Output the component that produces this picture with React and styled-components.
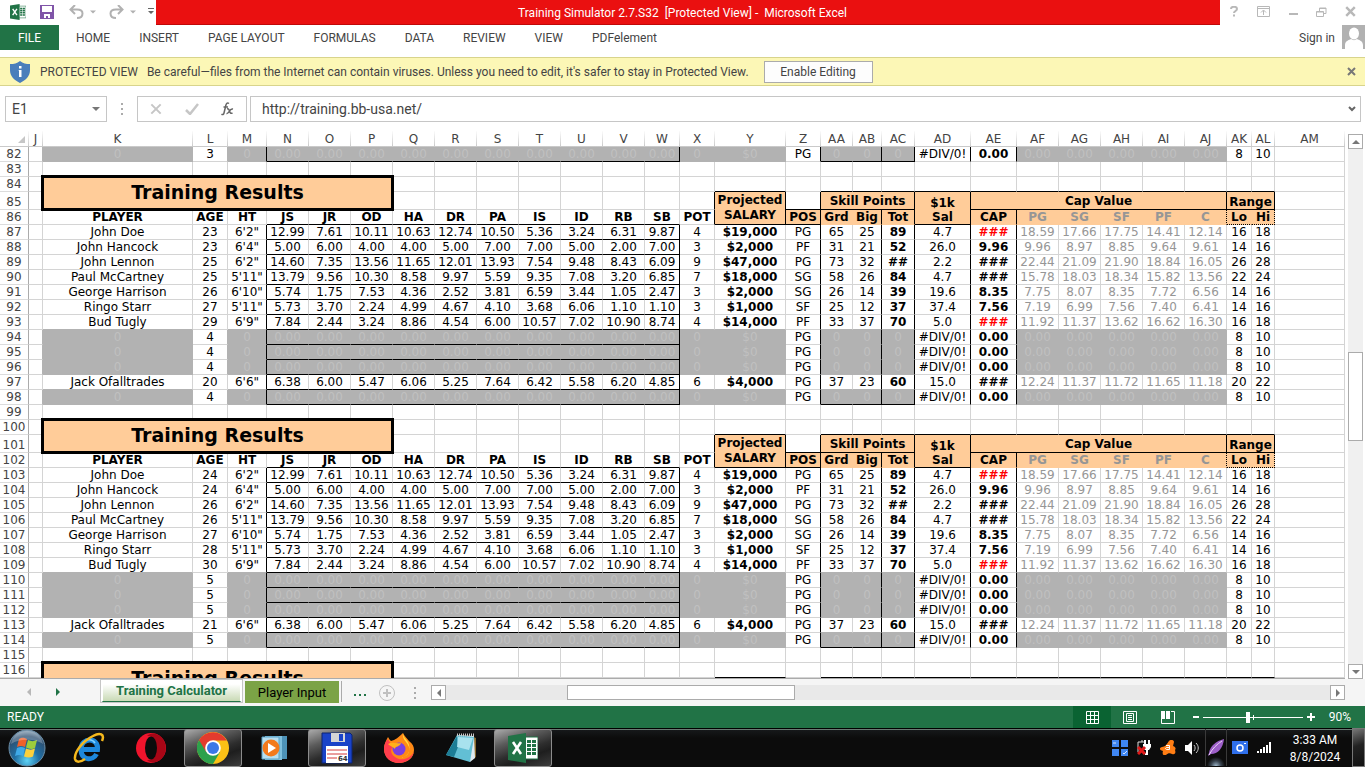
import React from 'react';
import styled, { createGlobalStyle, css } from 'styled-components';

const GlobalStyle = createGlobalStyle`
  * {
    box-sizing: border-box;
  }
  body {
    margin: 0;
    background: #fff;
    color: #444;
    font-family: Roboto, "Open Sans", sans-serif;
    font-size: 12px;
  }
  button, input {
    font: inherit;
    color: inherit;
    margin: 0;
    padding: 0;
    border: 0;
    border-radius: 0;
    background: none;
  }
  svg {
    display: block;
    flex: none;
  }
`;

const BLACK = '#000';
const LINE = '#d4d4d4';
const GREY = '#b2b2b2';
const PEACH = '#ffcc99';

/* ---------- window ---------- */

const Window = styled.div`
  display: flex;
  flex-direction: column;
  height: 100vh;
  overflow: hidden;
`;

const TitleBar = styled.header`
  display: flex;
  flex: none;
  height: 25px;
`;

const QuickAccess = styled.div`
  display: flex;
  align-items: center;
  width: 156px;
  padding: 0 3px 2px 10px;
`;

const QuickButton = styled.button`
  display: flex;
  align-items: center;
  gap: 6px;
  margin-right: ${props => props.$gap || 0}px;
`;

const Title = styled.div`
  flex: 1;
  padding-right: 11px;
  background: #ea1010;
  border-bottom: 1px solid #c00808;
  color: #fff;
  text-align: center;
  line-height: 26px;
  white-space: pre;
`;

const WindowButtons = styled.div`
  display: flex;
  align-items: center;
  justify-content: space-between;
  width: 145px;
  padding: 0 9px 2px 10px;
`;

const Ribbon = styled.nav`
  display: flex;
  flex: none;
  height: 32px;
  line-height: 26px;
`;

const FileTab = styled.button`
  width: 59px;
  height: 25px;
  background: #217346;
  color: #fff;
`;

const Tabs = styled.div`
  display: flex;
  flex: 1;
  gap: 29px;
  padding-left: 17px;
`;

const Tab = styled.button`
  height: 26px;
  white-space: nowrap;
`;

const SignIn = styled.button`
  display: flex;
  gap: 7px;
  height: 24px;
`;

const ProtectedBar = styled.div`
  display: flex;
  flex: none;
  align-items: center;
  height: 29px;
  padding: 0 9px 0 10px;
  background: #fcf7b6;
  border-top: 1px solid #d8d48c;
  border-bottom: 1px solid #d8d48c;
  white-space: nowrap;
`;

const ProtectedLabel = styled.span`
  margin: 0 9px 0 10px;
`;

const EnableButton = styled.button`
  width: 109px;
  height: 22px;
  margin: 0 auto 0 15px;
  background: #fdfdfd;
  border: 1px solid #ababab;
`;

const FormulaRow = styled.div`
  display: flex;
  flex: none;
  align-items: center;
  height: 45px;
  padding: 0 4px 0 5px;
`;

const Box = styled.div`
  display: flex;
  align-items: center;
  height: 26px;
  border: 1px solid #c6c6c6;
  flex: ${props => (props.$width ? 'none' : 1)};
  width: ${props => (props.$width ? `${props.$width}px` : 'auto')};
  padding: ${props => props.$pad || '0 6px'};
  justify-content: space-between;
`;

const BoxInput = styled.input`
  flex: 1;
  min-width: 0;
  height: 24px;
  outline: 0;
  font-size: 14px;
`;

const Dots = styled.span`
  display: flex;
  flex-direction: column;
  gap: 3px;
  margin: ${props => props.$margin};

  i {
    width: 2px;
    height: 2px;
    background: #ababab;
  }
`;

/* ---------- sheet ---------- */

const SheetArea = styled.main`
  display: flex;
  flex: 1;
  min-height: 0;
`;

const SheetView = styled.div`
  flex: 1;
  min-width: 0;
  overflow: hidden;
  border-bottom: 1px solid #ababab;
`;

const Sheet = styled.table`
  width: 100%;
  table-layout: fixed;
  border-collapse: separate;
  border-spacing: 0;
  font-family: "DejaVu Sans", Verdana, sans-serif;
  font-size: 12px;
  line-height: 14px;
  color: #000;
`;

const Row = styled.tr`
  height: ${props => props.$height || 15}px;
`;

const cellBase = css`
  padding: 0;
  overflow: hidden;
  text-align: center;
  white-space: nowrap;
`;

const ColHead = styled.th`
  ${cellBase}
  vertical-align: bottom;
  color: #444;
  font-weight: normal;
  border-bottom: 1px solid #ababab;
  border-right: 1px solid;
  border-image: linear-gradient(#fff, #c8c8c8) 1;
  border-bottom-color: #ababab;
`;

const RowHead = styled.th`
  ${cellBase}
  vertical-align: bottom;
  color: #444;
  font-weight: normal;
  border-bottom: 1px solid #dcdcdc;
  border-right: 1px solid #ababab;
`;

const Cell = styled.td`
  ${cellBase}
  background: ${props => props.$fill || '#fff'};
  color: ${props => props.$color || BLACK};
  font-weight: ${props => (props.$bold ? 'bold' : 'normal')};
  line-height: ${props => props.$leading || 14}px;
  vertical-align: ${props => (props.$low ? 'bottom' : 'middle')};
  border-right: 1px ${props => (props.$dotRight ? 'dotted' : 'solid')} ${props => props.$right || LINE};
  border-bottom: 1px ${props => (props.$dotBottom ? 'dotted' : 'solid')} ${props => props.$bottom || LINE};
`;

const TitleCell = styled.td`
  position: relative;
  padding: 0 0 3px;
  background: ${PEACH};
  border-right: 1px solid ${BLACK};
  border-bottom: 1px solid ${BLACK};
  font-size: 19px;
  font-weight: bold;
  line-height: 24px;
  text-align: center;

  /* thick frame runs over the neighbouring grid lines */
  &::after {
    content: "";
    position: absolute;
    inset: -2px;
    border: 3px solid ${BLACK};
  }
`;

const VScroll = styled.div`
  display: flex;
  flex-direction: column;
  width: 20px;
  padding: 3px 2px 0 3px;
  background: #fff;
`;

const VTrack = styled.div`
  flex: 1;
  background: #f0f0f0;
  display: flex;
  flex-direction: column;

  &::before {
    content: "";
    flex: 204;
  }
  &::after {
    content: "";
    flex: 224;
  }
`;

const HTrack = styled.div`
  flex: 1;
  display: flex;
  background: #e9e9e9;

  &::before {
    content: "";
    flex: 121;
  }
  &::after {
    content: "";
    flex: 536;
  }
`;

const Thumb = styled.div`
  flex: ${props => props.$share};
  background: #fff;
  border: 1px solid #ababab;
`;

const ScrollButton = styled.button`
  display: flex;
  align-items: center;
  justify-content: center;
  flex: none;
  width: 15px;
  height: 15px;
  background: #fff;
  border: 1px solid #ababab;
`;

const SheetBar = styled.div`
  display: flex;
  flex: none;
  height: 27px;
  padding-right: 20px;
  background: #f5f5f5;
`;

const SheetNav = styled.div`
  display: flex;
  justify-content: space-between;
  width: 100px;
  padding: 9px 38px 0 25px;

  button {
    height: 8px;
  }
`;

const ActiveSheet = styled.button`
  width: 143px;
  height: 24px;
  background: linear-gradient(#fff 20%, #c9dab5);
  border: 1px solid #fff;
  border-bottom: 2px solid #217346;
  outline: 1px solid #c6c6c6;
  outline-offset: -1px;
  border-left-width: 3px;
  border-right-width: 3px;
  color: #217346;
  font-size: 13px;
  font-weight: bold;
`;

const OtherSheet = styled.button`
  width: 94px;
  height: 22px;
  margin: 2px 2px 0;
  background: #7ba346;
  color: #000;
  font-size: 13px;
`;

const MoreSheets = styled.button`
  display: flex;
  gap: 3px;
  align-items: center;
  height: 21px;
  margin: 2px 13px 0 0;
  padding: 6px 0 0 12px;
  border-left: 1px solid #ababab;

  i {
    width: 2px;
    height: 2px;
    background: #217346;
  }
`;

const HScroll = styled.div`
  display: flex;
  flex: 1;
  height: 15px;
  margin-top: 6px;
`;

/* ---------- status bar ---------- */

const StatusBar = styled.footer`
  display: flex;
  flex: none;
  align-items: center;
  height: 22px;
  padding: 0 14px 0 7px;
  background: #217346;
  color: #fff;
`;

const Views = styled.div`
  display: flex;
  margin: 0 2px 0 auto;
`;

const ViewButton = styled.button`
  display: flex;
  align-items: center;
  justify-content: center;
  width: 38px;
  height: 22px;
  background: ${props => (props.$active ? '#0a6332' : 'none')};
`;

const ZoomButton = styled.button`
  display: flex;
  margin: 0 4px;
`;

const Slider = styled.input`
  appearance: none;
  width: 100px;
  height: 11px;
  margin: 0;
  background:
    linear-gradient(#fff, #fff) 50px 3px / 1px 5px no-repeat,
    linear-gradient(#fff, #fff) 0 5px / 100px 1px no-repeat;

  &::-webkit-slider-thumb {
    appearance: none;
    width: 4px;
    height: 11px;
    background: #fff;
  }
`;

const ZoomLabel = styled.span`
  width: 32px;
  text-align: right;
`;

/* ---------- taskbar ---------- */

const Taskbar = styled.div`
  display: flex;
  flex: none;
  align-items: stretch;
  height: 39px;
  background: linear-gradient(#000 1px, #6a7a72 1px, #6a7a72 2px, #16181a 2px, #0c0c0c 10px);
  color: #fff;
`;

const StartButton = styled.button`
  display: flex;
  align-items: center;
  justify-content: center;
  width: 54px;
`;

const Apps = styled.div`
  display: flex;
  gap: 4px;
  padding: 1px 0 0 6px;
`;

const AppButton = styled.button`
  display: flex;
  align-items: center;
  justify-content: center;
  width: 58px;
  ${props =>
    props.$open &&
    css`
      background: linear-gradient(160deg, #aaa 0%, #5c5c5c 30%, #2e2e2e 55%, #1e1e1e 70%, #3c3c3c 100%);
      border: 1px solid #8c8c8c;
      border-radius: 3px;
    `}
`;

const Tray = styled.div`
  display: flex;
  align-items: center;
  margin-left: auto;
`;

const TrayButton = styled.button`
  display: flex;
  align-items: center;
  justify-content: center;
  width: 24px;
  height: 37px;
  ${props =>
    props.$active &&
    css`
      width: 22px;
      margin: 0 1px;
      border-left: 1px solid #3a3a3a;
      border-right: 1px solid #3a3a3a;
      background: radial-gradient(circle at 50% 100%, #9fb8cc 0, #3a4550 5px, transparent 9px);
    `}
`;

const Clock = styled.time`
  width: 76px;
  padding: 2px 0 0 2px;
  text-align: center;
  line-height: 17px;
`;

const ShowDesktop = styled.button`
  width: 13px;
  border: 1px solid #777;
  background: linear-gradient(160deg, #777, #222 45%, #111);
`;

/* ---------- icons ---------- */

const ExcelIcon = ({ size }) => (
  <svg width={size} height={size} viewBox="0 0 30 30">
    <path d="M16 4h14v22H16z" fill="#fff" stroke="#217346" />
    <path d="M19 7h4v3h-4zm5 0h4v3h-4zm-5 4h4v3h-4zm5 0h4v3h-4zm-5 4h4v3h-4zm5 0h4v3h-4zm-5 4h4v3h-4zm5 0h4v3h-4z" fill="#217346" />
    <path d="M0 3L18 0v30L0 27z" fill="#217346" />
    <path d="M5 9l8 12M13 9L5 21" stroke="#fff" strokeWidth="2.6" />
  </svg>
);

const SaveIcon = () => (
  <svg width="14" height="14" viewBox="0 0 14 14">
    <path d="M0 0h14v14H0z" fill="#8055a8" />
    <path d="M2 1h10v6H2zM4 9h6v4H8v-2H6v2H4z" fill="#fff" />
  </svg>
);

const UndoIcon = ({ flip }) => (
  <svg width="15" height="14" viewBox="0 0 15 14" fill="none" stroke="#b1b1b1" strokeWidth="2">
    <g transform={flip ? 'translate(15 0) scale(-1 1)' : undefined}>
      <path d="M6 0L1.500 4.500 6 9M2 4.500h6c3 0 5.500 1 5.500 4S11 13 8 13" />
    </g>
  </svg>
);

const Arrow = ({ dir, color = '#777', size = 8 }) => {
  const turn = { down: 0, left: 90, up: 180, right: 270 }[dir];
  return (
    <svg width={size} height={size} viewBox="0 0 8 8">
      <path d="M0 2h8L4 6z" fill={color} transform={`rotate(${turn} 4 4)`} />
    </svg>
  );
};

const CustomizeIcon = () => (
  <svg width="6" height="8" viewBox="0 0 6 8">
    <path d="M0 0h6v1H0zM0 3h6L3 6z" fill="#666" />
  </svg>
);

const Cross = ({ size = 9, color = '#777', width = 2 }) => (
  <svg width={size} height={size} viewBox="0 0 9 9">
    <path d="M1 1l7 7M8 1L1 8" stroke={color} strokeWidth={width} />
  </svg>
);

const HelpIcon = () => (
  <svg width="9" height="11" viewBox="0 0 9 11" fill="none" stroke="#b8b8b8" strokeWidth="2">
    <path d="M1 3c0-3 6-3 6 0 0 2-3 2-3 4M4 8.500v2" />
  </svg>
);

const RibbonIcon = () => (
  <svg width="13" height="11" viewBox="0 0 13 11" fill="none" stroke="#b8b8b8">
    <path d="M.5.5h12v10H.5zM.5 2.500h12M6.500 9V4.500M4 6.500L6.500 4 9 6.500" />
  </svg>
);

const MinimizeIcon = () => (
  <svg width="9" height="11" viewBox="0 0 9 11">
    <path d="M0 7h9v2H0z" fill="#b8b8b8" />
  </svg>
);

const RestoreIcon = () => (
  <svg width="11" height="10" viewBox="0 0 11 10" fill="none" stroke="#b8b8b8">
    <path d="M.5 4.500h7v5h-7zM3.500 4V1h6.500v5.500H8M.5 5h7M3 1.500h7" />
  </svg>
);

const Avatar = () => (
  <svg width="23" height="24" viewBox="0 0 23 24">
    <path d="M0 0h23v24H0z" fill="#b1b1b1" />
    <ellipse cx="12" cy="8.500" rx="5" ry="6" fill="#fff" />
    <path d="M3 24v-4c0-4 4-5 6-6 2 1.500 4 1.500 6 0 2 1 6 2 6 6v4z" fill="#fff" />
  </svg>
);

const ShieldIcon = () => (
  <svg width="20" height="22" viewBox="0 0 20 22">
    <path d="M10 0c3 2.500 6 3 10 3v6c0 6-4 10-10 13C4 19 0 15 0 9V3c4 0 7-.5 10-3z" fill="#4a7ebb" />
    <path d="M9 5h2.500v2.500H9zM8.500 9h3v7H9v-6z" fill="#fff" />
  </svg>
);

const CheckIcon = () => (
  <svg width="14" height="12" viewBox="0 0 14 12">
    <path d="M1 7l4 4 8-10" fill="none" stroke="#c6c6c6" strokeWidth="2.500" />
  </svg>
);

const FxIcon = () => (
  <svg width="13" height="14" viewBox="0 0 13 14" fill="none" stroke="#666" strokeWidth="1.500">
    <path d="M8 1.500C6 0 5 2 4.700 4L3 11c-.3 1.600-1.500 2-2.500 1.200M2.500 5H7M6 7c1.500-.6 2 .5 2.500 2s1 3 3 2M12 7c-2-.5-3 1-3.500 2S7 12 5.500 11.500" />
  </svg>
);

const ChevronIcon = () => (
  <svg width="8" height="6" viewBox="0 0 8 6">
    <path d="M1 1l3 3 3-3" fill="none" stroke="#666" strokeWidth="2" />
  </svg>
);

const AddIcon = () => (
  <svg width="16" height="16" viewBox="0 0 16 16" fill="none" stroke="#c0c0c0">
    <circle cx="8" cy="8" r="7.500" />
    <path d="M8 4v8M4 8h8" strokeWidth="2" />
  </svg>
);

const NormalViewIcon = () => (
  <svg width="13" height="13" viewBox="0 0 13 13" fill="none" stroke="#fff">
    <path d="M.5.5h12v12H.5zM4.500 0v13M8.500 0v13M0 4.500h13M0 8.500h13" />
  </svg>
);

const PageViewIcon = () => (
  <svg width="14" height="13" viewBox="0 0 14 13" fill="none" stroke="#fff">
    <path d="M.5.5h13v12H.5zM3.500 2.500h7v8h-7zM5 4.500h4M5 6.500h4M5 8.500h4" />
  </svg>
);

const BreakViewIcon = () => (
  <svg width="14" height="13" viewBox="0 0 14 13">
    <path d="M.5 0v12.500h13V.5H10" fill="none" stroke="#fff" />
    <path d="M0 0h4v8H0zM5 0h4v8H5z" fill="#fff" />
  </svg>
);

const StartIcon = () => (
  <svg width="38" height="38" viewBox="0 0 38 38">
    <defs>
      <radialGradient id="orb" cx="50%" cy="85%" r="85%">
        <stop offset="0" stopColor="#5fd3f5" />
        <stop offset=".4" stopColor="#1f6fa5" />
        <stop offset=".8" stopColor="#2e4f70" />
        <stop offset="1" stopColor="#8fa9bd" />
      </radialGradient>
    </defs>
    <circle cx="19" cy="19" r="18" fill="url(#orb)" stroke="#6c8fa8" />
    <path d="M11 10c3-2 5-1.500 8 0l-2 8c-3-1.500-5-1.500-8 0z" fill="#f0602a" />
    <path d="M20 11c3 1.500 6 1.500 9 0l-2 8c-3 1.500-6 1-9-.5z" fill="#9ccc3c" />
    <path d="M9 19c3-1.500 5-1.500 8 0l-2 8c-3-1.500-5-1.500-8 0z" fill="#3fa9e8" />
    <path d="M18 19.500c3 1.500 6 1.500 9 0l-2 8c-3 1.500-6 1-9 0z" fill="#fcd03c" />
    <path d="M3 15C5 5 12 2 19 2s14 3 16 13C28 10 12 9 3 15z" fill="#fff" opacity=".25" />
  </svg>
);

const IeIcon = () => (
  <svg width="34" height="32" viewBox="0 0 34 32" fill="none">
    <path d="M10 17.500h15.500C27 5 9 5 9 17s12 12 15.500 5" stroke="#1e88dc" strokeWidth="5" />
    <path d="M10 12c3-5 10-6 13-1" stroke="#7fd0ff" strokeWidth="1.500" />
    <path d="M30 9c3-7-2-9-9-5C11 9 2 20 3 27c1 4 6 3 10 0" stroke="#f5b81c" strokeWidth="2.500" />
  </svg>
);

const OperaIcon = () => (
  <svg width="30" height="30" viewBox="0 0 30 30">
    <circle cx="15" cy="15" r="15" fill="#f0142c" />
    <path d="M20 1c13 4 13 24 0 28-4 1-7 0-9-2 12 2 12-26 0-24 2-2 5-3 9-2z" fill="#a80616" />
    <ellipse cx="15" cy="15" rx="6" ry="11.500" fill="#0c0c0c" />
  </svg>
);

const ChromeIcon = () => (
  <svg width="32" height="32" viewBox="0 0 32 32">
    <circle cx="16" cy="16" r="16" fill="#fbc116" />
    <path d="M2.100 8A16 16 0 0 0 16 32l7-12-7-4z" fill="#2da14c" />
    <path d="M16 8.500h13.800A16 16 0 0 0 2.100 8l7 12z" fill="#e33b2e" />
    <circle cx="16" cy="16" r="7.800" fill="#fff" />
    <circle cx="16" cy="16" r="6" fill="#3b78e7" />
  </svg>
);

const MediaIcon = () => (
  <svg width="28" height="26" viewBox="0 0 28 26">
    <path d="M7 1h19v23H7z" fill="#4d93b8" />
    <path d="M4 1h17v24H4z" fill="#7fc0dd" />
    <path d="M1 2h17v22H1z" fill="#b7dff0" stroke="#5ba3c7" />
    <circle cx="10" cy="13" r="8.500" fill="#f37a1c" />
    <path d="M7 8l8 5-8 5z" fill="#fff" />
  </svg>
);

const FloppyIcon = () => (
  <svg width="32" height="32" viewBox="0 0 32 32">
    <path d="M1 1h28l2 2v28H1z" fill="#1a43c8" stroke="#0c2470" />
    <path d="M10 1h14v9H10z" fill="#d5d5d5" />
    <path d="M18 2h4v7h-4z" fill="#1a43c8" />
    <path d="M5 14h22v17H5z" fill="#fff" />
    <path d="M6 18h20M6 22h20M6 26h10" stroke="#d43a3a" />
    <text x="17" y="29" fontSize="7" fontWeight="bold" fontFamily="DejaVu Sans, sans-serif" fill="#333">64</text>
  </svg>
);

const FirefoxIcon = () => (
  <svg width="32" height="32" viewBox="0 0 32 32">
    <path d="M20 1c1 3 4 5 6 8 4 3 5 6 5 9 0 8-7 13-15 13S1 25 1 17c0-5 2-8 4-12 1 2 2 3 3 4 4-1 8-4 12-8z" fill="#ff8a16" />
    <path d="M20 1c0 5 5 7 6 12 2 6-2 12-8 13 8-1 10-9 7-13-2-4-6-6-5-12z" fill="#ffdf3e" />
    <path d="M1 17c0 9 7 14 15 14 7 0 13-4 15-11-5 8-14 9-19 5-6-4-4-10 0-12-4-1-6-3-7-6-3 3-4 6-4 10z" fill="#ff3d4d" />
    <circle cx="16" cy="17" r="6.500" fill="#7b3fe0" />
    <path d="M5 12c4-3 8 0 13-1-1 4-6 3-6 6-3-3-5-3-7-5z" fill="#ffb11a" />
  </svg>
);

const NotepadIcon = () => (
  <svg width="31" height="30" viewBox="0 0 31 30">
    <path d="M25 3l5 2v19l-4 3z" fill="#8a6a2c" />
    <path d="M11 2l17 1 1 22-5 4z" fill="#dfeaf0" />
    <path d="M11 2L0 22l24 7 4-25z" fill="#62bfd4" />
    <path d="M11 3L0 22l8 2 4-10z" fill="#1c7d96" />
    <path d="M12 4l15 1-4 12-12-3z" fill="#a8e2ee" />
    <path d="M11 2h17" stroke="#c8c8c8" strokeWidth="3" strokeDasharray="1 1" />
  </svg>
);

const TilesIcon = () => (
  <svg width="16" height="16" viewBox="0 0 16 16">
    <path d="M0 0h7v7H0zM9 0h7v7H9zM0 9h7v7H0zM9 9h7v7H9z" fill="#3f86f2" />
    <path d="M1 3h3M11 13l1 1 3-3" stroke="#d5e5ff" fill="none" />
  </svg>
);

const PowerIcon = () => (
  <svg width="14" height="15" viewBox="0 0 14 15" fill="none">
    <path d="M1 12V2h4V0M5 2h3" stroke="#ddd" />
    <path d="M8 0v4M12 0v4" stroke="#fff" strokeWidth="2" />
    <path d="M6 4h8v3l-2 3H8L6 8z" fill="#fff" />
    <path d="M10 10v4H8" stroke="#fff" strokeWidth="2" />
    <path d="M1 7l7 7M8 7l-7 7" stroke="#e01818" strokeWidth="3" />
  </svg>
);

const AvastIcon = () => (
  <svg width="16" height="15" viewBox="0 0 16 15">
    <path d="M9 1c2-2 5-1 5 1l-1 4c3 1 3 3 2 4 1 3 0 5-3 4-2-1-4-1-6 1-3 1-4-1-3-4-4-1-4-3-1-4 3 0 5-3 7-6z" fill="#ff7d14" />
    <path d="M6 5.500h3.500v4H7c-2 0-2-2 0-2h2" fill="none" stroke="#fff" />
  </svg>
);

const SpeakerIcon = () => (
  <svg width="14" height="14" viewBox="0 0 14 14" fill="none">
    <path d="M0 4h3l4-4v14l-4-4H0z" fill="#fff" />
    <path d="M9 4c1.500 2 1.500 4 0 6M11 2c3 3 3 7 0 10" stroke="#ccc" />
  </svg>
);

const FeatherIcon = () => (
  <svg width="16" height="17" viewBox="0 0 16 17">
    <path d="M16 0C8 2 2 7 1 14l-1 3 3-2c7 0 12-6 13-15z" fill="#9d5fc9" />
    <path d="M14 2C9 5 4 10 1 16" stroke="#ead4f7" fill="none" />
  </svg>
);

const CameraIcon = () => (
  <svg width="16" height="13" viewBox="0 0 16 13">
    <path d="M0 0h16v13H0z" fill="#2f6fea" />
    <circle cx="8" cy="7" r="3" fill="none" stroke="#fff" strokeWidth="1.500" />
    <path d="M12 2h2v1h-2z" fill="#fff" />
  </svg>
);

const SignalIcon = () => (
  <svg width="14" height="11" viewBox="0 0 14 11">
    <path d="M0 9h2v2H0zM3 7h2v4H3zM6 5h2v6H6zM9 3h2v8H9zM12 0h2v11h-2z" fill="#fff" />
  </svg>
);

/* ---------- sheet data ---------- */

const columns = [
  ['J', 14], ['K', 150], ['L', 35], ['M', 39], ['N', 42], ['O', 42], ['P', 42], ['Q', 42],
  ['R', 42], ['S', 42], ['T', 42], ['U', 42], ['V', 42], ['W', 35], ['X', 35], ['Y', 71],
  ['Z', 35], ['AA', 32], ['AB', 29], ['AC', 33], ['AD', 56], ['AE', 46], ['AF', 42], ['AG', 42],
  ['AH', 42], ['AI', 42], ['AJ', 42], ['AK', 25], ['AL', 23], ['AM', null],
];
const names = columns.map(c => c[0]);
const at = name => names.indexOf(name);
const between = (i, from, to) => i >= at(from) && i <= at(to);

const empty = age => ({
  empty: true,
  cells: ['0', age, '0', ...Array(10).fill('0.00'), '0', '$0', 'PG', '0', '0', '0', '#DIV/0!', '0.00', ...Array(5).fill('0.00'), '8', '10'],
});

const player = (name, age, line, red) => ({ red, cells: [name, age, ...line.split(' ')] });

const roster = years => [
  player('John Doe', 23 + years, `6'2" 12.99 7.61 10.11 10.63 12.74 10.50 5.36 3.24 6.31 9.87 4 $19,000 PG 65 25 89 4.7 ### 18.59 17.66 17.75 14.41 12.14 16 18`, true),
  player('John Hancock', 23 + years, `6'4" 5.00 6.00 4.00 4.00 5.00 7.00 7.00 5.00 2.00 7.00 3 $2,000 PF 31 21 52 26.0 9.96 9.96 8.97 8.85 9.64 9.61 14 16`),
  player('John Lennon', 25 + years, `6'2" 14.60 7.35 13.56 11.65 12.01 13.93 7.54 9.48 8.43 6.09 9 $47,000 PG 73 32 ## 2.2 ### 22.44 21.09 21.90 18.84 16.05 26 28`),
  player('Paul McCartney', 25 + years, `5'11" 13.79 9.56 10.30 8.58 9.97 5.59 9.35 7.08 3.20 6.85 7 $18,000 SG 58 26 84 4.7 ### 15.78 18.03 18.34 15.82 13.56 22 24`),
  player('George Harrison', 26 + years, `6'10" 5.74 1.75 7.53 4.36 2.52 3.81 6.59 3.44 1.05 2.47 3 $2,000 SG 26 14 39 19.6 8.35 7.75 8.07 8.35 7.72 6.56 14 16`),
  player('Ringo Starr', 27 + years, `5'11" 5.73 3.70 2.24 4.99 4.67 4.10 3.68 6.06 1.10 1.10 3 $1,000 SF 25 12 37 37.4 7.56 7.19 6.99 7.56 7.40 6.41 14 16`),
  player('Bud Tugly', 29 + years, `6'9" 7.84 2.44 3.24 8.86 4.54 6.00 10.57 7.02 10.90 8.74 4 $14,000 PF 33 37 70 5.0 ### 11.92 11.37 13.62 16.62 16.30 16 18`, true),
  empty(4 + years),
  empty(4 + years),
  empty(4 + years),
  player('Jack Ofalltrades', 20 + years, `6'6" 6.38 6.00 5.47 6.06 5.25 7.64 6.42 5.58 6.20 4.85 6 $4,000 PG 37 23 60 15.0 ### 12.24 11.37 11.72 11.65 11.18 20 22`),
  empty(4 + years),
];

const fillable = i =>
  i === at('K') || between(i, 'M', 'Y') || between(i, 'AA', 'AC') || between(i, 'AF', 'AJ');
const blackRight = ['M', 'W', 'Z', 'AB', 'AC', 'AD', 'AE'];
const boldColumns = ['Y', 'AC', 'AE'];

/* ---------- sheet rows ---------- */

function PlayerRow({ number, data, next }) {
  const texts = ['', ...data.cells, ''];
  return (
    <Row>
      <RowHead scope="row">{number}</RowHead>
      {texts.map((text, i) => {
        const filled = data.empty && fillable(i);
        let right = data.empty && (fillable(i) || fillable(i + 1)) ? GREY : LINE;
        if (blackRight.includes(names[i])) right = BLACK;
        let bottom = fillable(i) && (data.empty || (next && next.empty)) ? GREY : LINE;
        if (between(i, 'N', 'W') || (!next && between(i, 'AA', 'AC'))) bottom = BLACK;
        let color = BLACK;
        if (between(i, 'AF', 'AJ')) color = '#969696';
        if (filled) color = '#c0c0c0';
        if (data.red && names[i] === 'AE') color = '#f00';
        return (
          <Cell
            key={names[i]}
            $fill={filled && GREY}
            $right={right}
            $bottom={bottom}
            $color={color}
            $bold={boldColumns.includes(names[i]) && !filled}
          >
            {text}
          </Cell>
        );
      })}
    </Row>
  );
}

function BlankRow({ number }) {
  return (
    <Row>
      <RowHead scope="row">{number}</RowHead>
      {names.map(name => <Cell key={name} />)}
    </Row>
  );
}

const skillHeads = ['JS', 'JR', 'OD', 'HA', 'DR', 'PA', 'IS', 'ID', 'RB', 'SB'];
const capHeads = ['PG', 'SG', 'SF', 'PF', 'C'];

function ResultsHead({ start }) {
  return (
    <>
      <Row>
        <RowHead scope="row">{start}</RowHead>
        <Cell />
        <TitleCell colSpan={6} rowSpan={2}>Training Results</TitleCell>
        {names.slice(at('Q')).map(name => (
          <Cell
            key={name}
            $bottom={name === 'Y' || between(at(name), 'AA', 'AL') ? BLACK : LINE}
          />
        ))}
      </Row>
      <Row $height={18}>
        <RowHead scope="row">{start + 1}</RowHead>
        <Cell />
        {names.slice(at('Q'), at('X')).map(name => <Cell key={name} />)}
        <Cell $right={BLACK} />
        <Cell rowSpan={2} $fill={PEACH} $right={BLACK} $bottom={BLACK} $bold $leading={15}>
          Projected<br />SALARY
        </Cell>
        <Cell $right={BLACK} $bottom={BLACK} />
        <Cell colSpan={3} $fill={PEACH} $right={BLACK} $bottom={BLACK} $bold>Skill Points</Cell>
        <Cell rowSpan={2} $fill={PEACH} $right={BLACK} $bottom={BLACK} $bold $leading={14} $low>
          $1k<br />Sal
        </Cell>
        <Cell colSpan={6} $fill={PEACH} $right={BLACK} $bottom={BLACK} $bold>Cap Value</Cell>
        <Cell colSpan={2} $fill={PEACH} $right={BLACK} $bottom={BLACK} $bold $low>Range</Cell>
        <Cell />
      </Row>
      <Row>
        <RowHead scope="row">{start + 2}</RowHead>
        <Cell />
        <Cell $bold>PLAYER</Cell>
        <Cell $bold>AGE</Cell>
        <Cell $bold>HT</Cell>
        {skillHeads.map(head => <Cell key={head} $bold $bottom={BLACK}>{head}</Cell>)}
        <Cell $bold $right={BLACK}>POT</Cell>
        <Cell $bold $fill={PEACH} $right={BLACK} $bottom={BLACK}>POS</Cell>
        <Cell $bold $fill={PEACH} $right={PEACH} $bottom={PEACH}>Grd</Cell>
        <Cell $bold $fill={PEACH} $right={BLACK} $bottom={PEACH}>Big</Cell>
        <Cell $bold $fill={PEACH} $right={BLACK} $bottom={PEACH}>Tot</Cell>
        <Cell $bold $fill={PEACH} $right={BLACK} $bottom={PEACH}>CAP</Cell>
        {capHeads.map(head => (
          <Cell
            key={head}
            $bold
            $fill={PEACH}
            $color="#969696"
            $right={head === 'C' ? BLACK : PEACH}
            $dotRight={head === 'C'}
            $bottom={PEACH}
          >
            {head}
          </Cell>
        ))}
        <Cell $bold $fill={PEACH} $right={PEACH} $bottom={BLACK} $dotBottom>Lo</Cell>
        <Cell $bold $fill={PEACH} $right={BLACK} $dotRight $bottom={BLACK} $dotBottom>Hi</Cell>
        <Cell />
      </Row>
    </>
  );
}

function Results({ start, years }) {
  const rows = roster(years);
  return (
    <>
      <ResultsHead start={start} />
      {rows.map((data, i) => (
        <PlayerRow key={i} number={start + 3 + i} data={data} next={rows[i + 1]} />
      ))}
      <BlankRow number={start + 15} />
    </>
  );
}

function Spreadsheet() {
  return (
    <SheetView>
      <Sheet>
        <colgroup>
          <col width="29" />
          {columns.map(([name, width]) => <col key={name} width={width || undefined} />)}
        </colgroup>
        <thead>
          <Row $height={16}>
            <ColHead aria-label="Select all">
              <svg width="26" height="11" viewBox="0 0 26 11">
                <path d="M25 1v7h-7z" fill="#c6c6c6" />
              </svg>
            </ColHead>
            {names.map(name => <ColHead key={name} scope="col">{name}</ColHead>)}
          </Row>
        </thead>
        <tbody>
          <PlayerRow number={82} data={empty(3)} />
          <BlankRow number={83} />
          <Results start={84} years={0} />
          <Results start={100} years={1} />
          <ResultsHead start={116} />
        </tbody>
      </Sheet>
    </SheetView>
  );
}

/* ---------- page ---------- */

const ribbonTabs = ['HOME', 'INSERT', 'PAGE LAYOUT', 'FORMULAS', 'DATA', 'REVIEW', 'VIEW', 'PDFelement'];

const apps = [
  ['Internet Explorer', <IeIcon />],
  ['Opera', <OperaIcon />],
  ['Chrome', <ChromeIcon />, true],
  ['Media Player', <MediaIcon />],
  ['Total Commander', <FloppyIcon />, true],
  ['Firefox', <FirefoxIcon />],
  ['Notepad', <NotepadIcon />],
  ['Excel', <ExcelIcon size={30} />, true],
];

const trayItems = [
  ['Tiles', <TilesIcon />],
  ['Power', <PowerIcon />],
  ['Avast', <AvastIcon />],
  ['Volume', <SpeakerIcon />],
  ['Feather', <FeatherIcon />, true],
  ['Camera', <CameraIcon />],
  ['Network', <SignalIcon />],
];

function App() {
  return (
    <Window>
      <GlobalStyle />
      <TitleBar>
        <QuickAccess>
          <QuickButton aria-label="Excel" $gap={14}><ExcelIcon size={16} /></QuickButton>
          <QuickButton aria-label="Save" $gap={15}><SaveIcon /></QuickButton>
          <QuickButton aria-label="Undo" $gap={13}><UndoIcon /><Arrow dir="down" color="#b1b1b1" size={6} /></QuickButton>
          <QuickButton aria-label="Redo" $gap={12}><UndoIcon flip /><Arrow dir="down" color="#b1b1b1" size={6} /></QuickButton>
          <QuickButton aria-label="Customize"><CustomizeIcon /></QuickButton>
        </QuickAccess>
        <Title>{'Training Simulator 2.7.S32  [Protected View] -  Microsoft Excel'}</Title>
        <WindowButtons>
          <button aria-label="Help"><HelpIcon /></button>
          <button aria-label="Ribbon options"><RibbonIcon /></button>
          <button aria-label="Minimize"><MinimizeIcon /></button>
          <button aria-label="Restore"><RestoreIcon /></button>
          <button aria-label="Close"><Cross size={11} color="#b8b8b8" /></button>
        </WindowButtons>
      </TitleBar>

      <Ribbon>
        <FileTab>FILE</FileTab>
        <Tabs>
          {ribbonTabs.map(tab => <Tab key={tab}>{tab}</Tab>)}
        </Tabs>
        <SignIn>Sign in <Avatar /></SignIn>
      </Ribbon>

      <ProtectedBar>
        <ShieldIcon />
        <ProtectedLabel>PROTECTED VIEW</ProtectedLabel>
        <span>Be careful—files from the Internet can contain viruses. Unless you need to edit, it's safer to stay in Protected View.</span>
        <EnableButton>Enable Editing</EnableButton>
        <button aria-label="Dismiss"><Cross /></button>
      </ProtectedBar>

      <FormulaRow>
        <Box $width={102}>
          <BoxInput aria-label="Name box" defaultValue="E1" />
          <button aria-label="Open name list"><Arrow dir="down" /></button>
        </Box>
        <Dots $margin="0 14px"><i /><i /><i /></Dots>
        <Box $width={110} $pad="0 12px">
          <button aria-label="Cancel"><Cross size={12} color="#c6c6c6" width={1.5} /></button>
          <button aria-label="Enter"><CheckIcon /></button>
          <button aria-label="Insert function"><FxIcon /></button>
        </Box>
        <Dots $margin="0 3px 0 0" />
        <Box $pad="0 4px 0 11px">
          <BoxInput aria-label="Formula" defaultValue="http://training.bb-usa.net/" />
          <button aria-label="Expand formula bar"><ChevronIcon /></button>
        </Box>
      </FormulaRow>

      <SheetArea>
        <Spreadsheet />
        <VScroll>
          <ScrollButton aria-label="Scroll up"><Arrow dir="up" /></ScrollButton>
          <VTrack><Thumb $share={87} /></VTrack>
          <ScrollButton aria-label="Scroll down"><Arrow dir="down" /></ScrollButton>
        </VScroll>
      </SheetArea>

      <SheetBar>
        <SheetNav>
          <button aria-label="Previous sheet"><Arrow dir="left" color="#b8b8b8" /></button>
          <button aria-label="Next sheet"><Arrow dir="right" color="#217346" /></button>
        </SheetNav>
        <ActiveSheet>Training Calculator</ActiveSheet>
        <OtherSheet>Player Input</OtherSheet>
        <MoreSheets aria-label="More sheets"><i /><i /><i /></MoreSheets>
        <button aria-label="New sheet"><AddIcon /></button>
        <Dots $margin="8px 15px 0 19px"><i /><i /><i /></Dots>
        <HScroll>
          <ScrollButton aria-label="Scroll left"><Arrow dir="left" /></ScrollButton>
          <HTrack><Thumb $share={227} /></HTrack>
          <ScrollButton aria-label="Scroll right"><Arrow dir="right" /></ScrollButton>
        </HScroll>
      </SheetBar>

      <StatusBar>
        <span>READY</span>
        <Views>
          <ViewButton $active aria-label="Normal"><NormalViewIcon /></ViewButton>
          <ViewButton aria-label="Page layout"><PageViewIcon /></ViewButton>
          <ViewButton aria-label="Page break preview"><BreakViewIcon /></ViewButton>
        </Views>
        <ZoomButton aria-label="Zoom out">
          <svg width="6" height="8" viewBox="0 0 6 8"><path d="M0 3h6v2H0z" fill="#fff" /></svg>
        </ZoomButton>
        <Slider type="range" min="0" max="100" defaultValue="45" aria-label="Zoom" />
        <ZoomButton aria-label="Zoom in">
          <svg width="8" height="8" viewBox="0 0 8 8"><path d="M0 3h8v2H0zM3 0h2v8H3z" fill="#fff" /></svg>
        </ZoomButton>
        <ZoomLabel>90%</ZoomLabel>
      </StatusBar>

      <Taskbar>
        <StartButton aria-label="Start"><StartIcon /></StartButton>
        <Apps>
          {apps.map(([name, icon, open]) => (
            <AppButton key={name} aria-label={name} $open={open}>{icon}</AppButton>
          ))}
        </Apps>
        <Tray>
          {trayItems.map(([name, icon, active]) => (
            <TrayButton key={name} aria-label={name} $active={active}>{icon}</TrayButton>
          ))}
          <Clock>3:33 AM<br />8/8/2024</Clock>
        </Tray>
        <ShowDesktop aria-label="Show desktop" />
      </Taskbar>
    </Window>
  );
}

export default App;
